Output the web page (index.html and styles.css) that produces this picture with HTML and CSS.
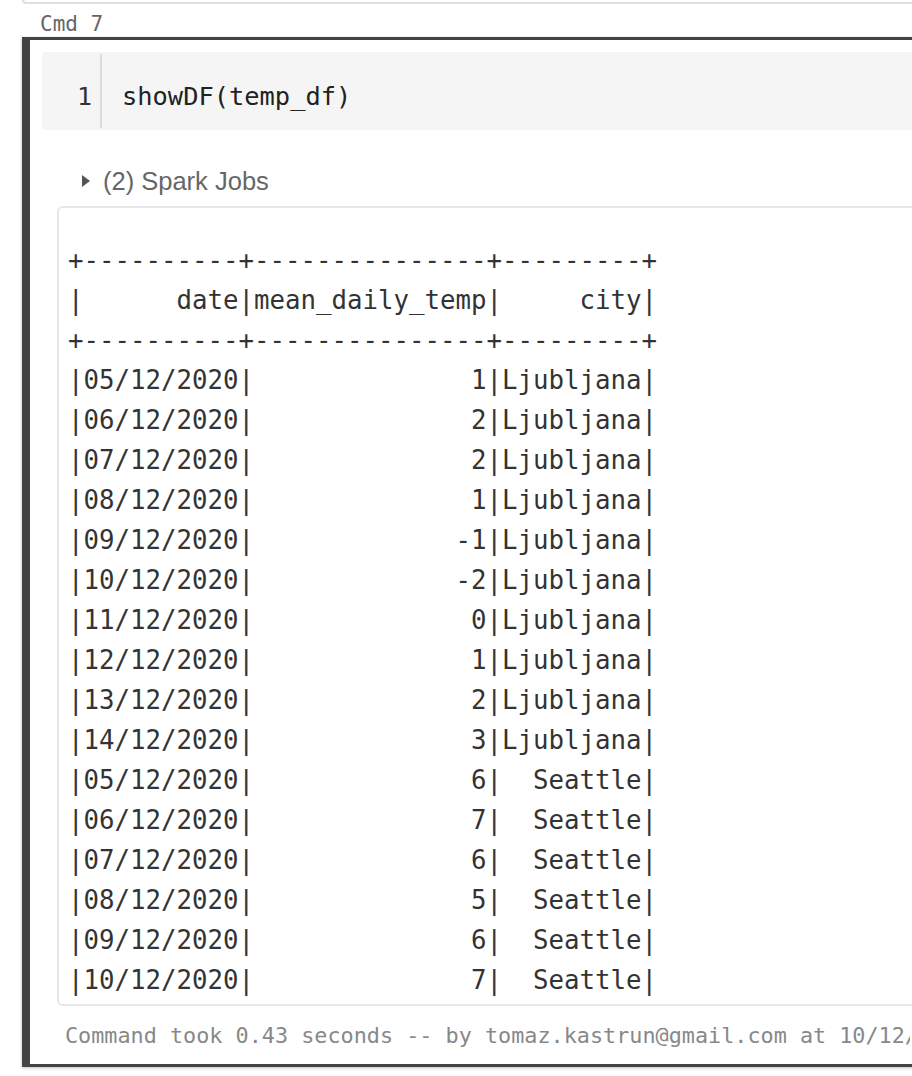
FILE: index.html
```html
<!DOCTYPE html>
<html>
<head>
<meta charset="utf-8">
<link rel="stylesheet" href="styles.css">
</head>
<body>
<div class="prev-cell"></div>
<div class="cmd-label">Cmd 7</div>
<div class="cell">
  <div class="code">
    <div class="gutter"><span class="lineno">1</span></div>
    <div class="source">showDF(temp_df)</div>
  </div>
  <div class="jobs"><span class="tri"></span><span>(2) Spark Jobs</span></div>
  <div class="output"><pre>+----------+---------------+---------+
|      date|mean_daily_temp|     city|
+----------+---------------+---------+
|05/12/2020|              1|Ljubljana|
|06/12/2020|              2|Ljubljana|
|07/12/2020|              2|Ljubljana|
|08/12/2020|              1|Ljubljana|
|09/12/2020|             -1|Ljubljana|
|10/12/2020|             -2|Ljubljana|
|11/12/2020|              0|Ljubljana|
|12/12/2020|              1|Ljubljana|
|13/12/2020|              2|Ljubljana|
|14/12/2020|              3|Ljubljana|
|05/12/2020|              6|  Seattle|
|06/12/2020|              7|  Seattle|
|07/12/2020|              6|  Seattle|
|08/12/2020|              5|  Seattle|
|09/12/2020|              6|  Seattle|
|10/12/2020|              7|  Seattle|</pre></div>
  <div class="footer">Command took 0.43 seconds -- by tomaz.kastrun@gmail.com at 10/12/2020</div>
</div>
</body>
</html>
```

FILE: styles.css
```css
html, body {
  margin: 0;
  padding: 0;
  background: #fff;
  overflow: hidden;
}
body {
  width: 912px;
  height: 1076px;
}
.prev-cell {
  margin-left: 22px;
  width: 1000px;
  height: 2px;
  border-bottom: 2px solid #e0e0e0;
  border-left: 2px solid #e0e0e0;
  border-bottom-left-radius: 4px;
}
.cmd-label {
  padding-left: 40px;
  height: 33px;
  line-height: 40px;
  font-family: "DejaVu Sans Mono", monospace;
  font-size: 21px;
  color: #666;
}
.cell {
  margin-left: 22px;
  width: 1000px;
  border-left: 8px solid #444;
  border-top: 3px solid #444;
  border-bottom: 3px solid #444;
  box-shadow: 0 1px 3px rgba(0,0,0,0.25);
  padding-top: 12px;
  padding-bottom: 12px;
  background: #fff;
}
.code {
  margin-left: 12px;
  height: 78px;
  background: #f5f5f5;
  border-radius: 4px 0 0 4px;
  display: flex;
  align-items: stretch;
}
.gutter {
  width: 60px;
  margin: 2px 0;
  border-right: 2px solid #dcdcdc;
  display: flex;
  align-items: center;
  justify-content: flex-end;
  padding: 10px 8px 0 0;
  box-sizing: border-box;
  font-family: "DejaVu Sans Mono", monospace;
  font-size: 25px;
  color: #333;
}
.source {
  padding: 10px 0 0 20px;
  display: flex;
  align-items: center;
  font-family: "DejaVu Sans Mono", monospace;
  font-size: 25.4px;
  color: #222;
}
.jobs {
  margin-left: 52px;
  margin-top: 31px;
  height: 40px;
  display: flex;
  align-items: center;
  gap: 13px;
  font-family: "Liberation Sans", Arial, sans-serif;
  font-size: 25.5px;
  color: #666;
}
.tri {
  width: 0;
  height: 0;
  border-top: 6px solid transparent;
  border-bottom: 6px solid transparent;
  border-left: 8px solid #555;
}
.output {
  margin-left: 27px;
  margin-top: 5px;
  border: 2px solid #e4e8eb;
  border-right: none;
  border-radius: 6px 0 0 6px;
  padding: 32px 0 4px 9px;
}
.output pre {
  margin: 0;
  font-family: "DejaVu Sans Mono", monospace;
  font-size: 25.75px;
  line-height: 40px;
  color: #333;
}
.footer {
  margin-left: 35px;
  margin-top: 14px;
  height: 32px;
  line-height: 32px;
  white-space: nowrap;
  overflow: hidden;
  width: 845px;
  font-family: "DejaVu Sans Mono", monospace;
  font-size: 21.8px;
  color: #888;
}
```
